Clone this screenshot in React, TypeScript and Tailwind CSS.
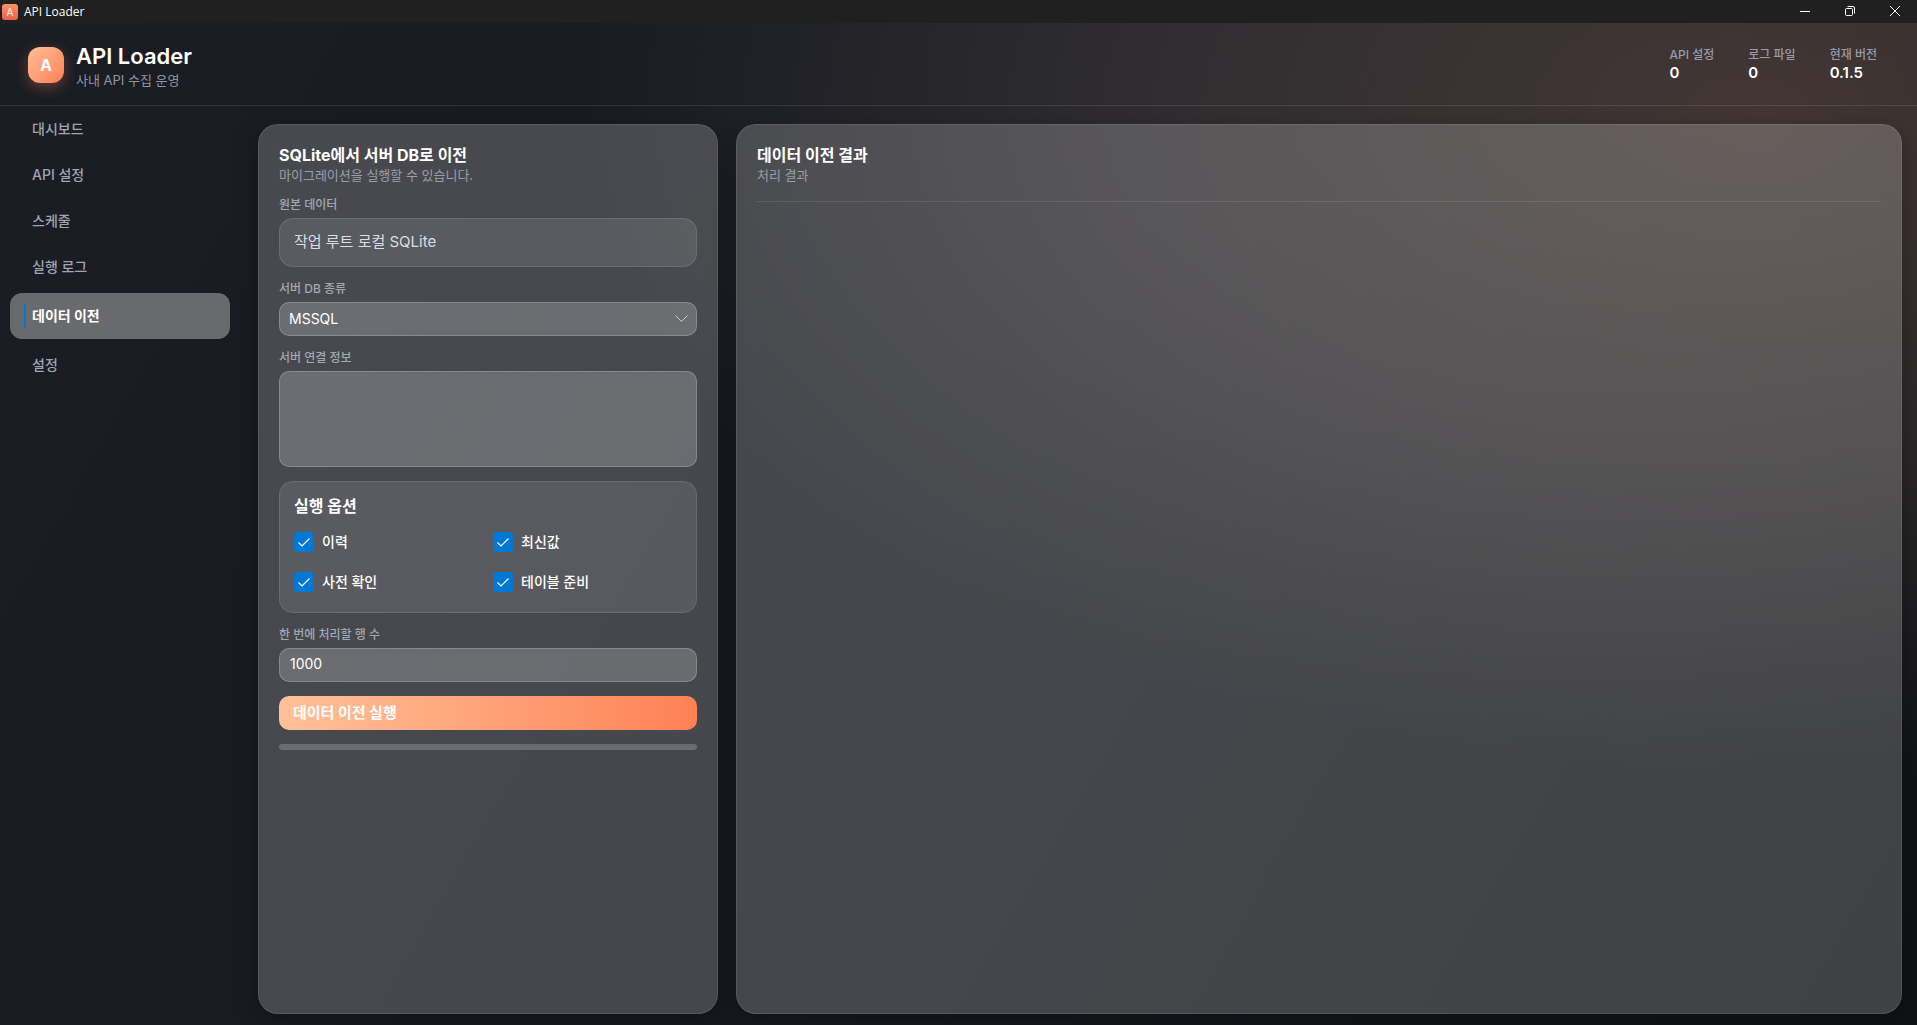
import React from 'react';

interface Stat {
  label: string;
  value: string;
}

interface MigrationOption {
  id: string;
  label: string;
}

const NAV_ITEMS = ['대시보드', 'API 설정', '스케줄', '실행 로그', '데이터 이전', '설정'];

const STATS: Stat[] = [
  { label: 'API 설정', value: '0' },
  { label: '로그 파일', value: '0' },
  { label: '현재 버전', value: '0.1.5' },
];

const OPTIONS: MigrationOption[] = [
  { id: 'history', label: '이력' },
  { id: 'latest', label: '최신값' },
  { id: 'precheck', label: '사전 확인' },
  { id: 'tables', label: '테이블 준비' },
];

const fieldClass =
  'block w-full rounded-[10px] border border-white/20 bg-white/20 text-sm text-white outline-none';

const TitleBar: React.FC = () => (
  <div className="flex h-[23px] items-center bg-[#202020] text-white">
    <div className="ml-0.5 flex size-4 items-center justify-center rounded-[3px] bg-linear-to-b from-[#ff9168] to-[#e8604c] text-[10px] leading-none text-white/90">
      A
    </div>
    <span className="ml-1.5 flex-1 font-['Open_Sans',sans-serif] text-xs leading-4">API Loader</span>
    <button type="button" aria-label="최소화" className="flex h-full w-[45px] items-center justify-center pb-0.5">
      <svg width="10" height="10" viewBox="0 0 10 10" fill="none" stroke="currentColor">
        <path d="M0 5.5h10" />
      </svg>
    </button>
    <button type="button" aria-label="이전 크기로" className="flex h-full w-[45px] items-center justify-center pb-0.5">
      <svg width="10" height="10" viewBox="0 0 10 10" fill="none" stroke="currentColor">
        <rect x="0.5" y="2.5" width="7" height="7" rx="1" />
        <path d="M2.5 0.5H8A1.5 1.5 0 0 1 9.5 2v5.5" />
      </svg>
    </button>
    <button type="button" aria-label="닫기" className="flex h-full w-[45px] items-center justify-center pb-0.5">
      <svg width="10" height="10" viewBox="0 0 10 10" fill="none" stroke="currentColor">
        <path d="M0 0l10 10M10 0L0 10" />
      </svg>
    </button>
  </div>
);

const Header: React.FC = () => (
  <header className="flex h-[83px] items-center justify-between border-b border-white/10 pt-0.5 pr-10 pl-7">
    <div className="flex items-center gap-3">
      <div className="flex size-9 items-center justify-center rounded-xl bg-linear-to-br from-[#ffbe98] to-[#ff8055] text-base font-bold text-white shadow-[0_4px_14px_rgba(255,127,80,0.35)]">
        A
      </div>
      <div className="pt-0.5">
        <h1 className="text-[22px] leading-7 font-semibold text-white">API Loader</h1>
        <p className="text-[13px] leading-5 text-[#9096a3]">사내 API 수집 운영</p>
      </div>
    </div>
    <dl className="flex gap-[34px]">
      {STATS.map(stat => (
        <div key={stat.label}>
          <dt className="text-xs leading-4 font-medium text-[#989ba8]">{stat.label}</dt>
          <dd className="text-[15px] leading-5 font-semibold text-white">{stat.value}</dd>
        </div>
      ))}
    </dl>
  </header>
);

interface SidebarProps {
  active: string;
  onSelect: (item: string) => void;
}

const Sidebar: React.FC<SidebarProps> = ({ active, onSelect }) => (
  <nav className="w-[240px] shrink-0 px-2.5">
    {NAV_ITEMS.map(item => (
      <button
        type="button"
        key={item}
        onClick={() => onSelect(item)}
        className={`flex h-[46px] w-full items-center rounded-xl pl-3.5 text-left text-sm
          ${item === active ? 'my-[3px] bg-[#696a6e] font-bold text-white' : 'font-medium text-[#a0a4b0]'}
        `}
      >
        <span className={`mr-1.5 h-6 w-0.5 ${item === active ? 'bg-[#0078d4]' : ''}`}></span>
        {item}
      </button>
    ))}
  </nav>
);

interface CardProps {
  title: string;
  description: string;
  className: string;
  children: React.ReactNode;
}

const Card: React.FC<CardProps> = ({ title, description, className, children }) => (
  <section
    className={`rounded-[20px] border border-white/10 bg-white/20 px-5 pt-5 pb-5 shadow-[0_6px_24px_rgba(0,0,0,0.3)] ${className}`}
  >
    <h2 className="text-base leading-5 font-bold text-white">{title}</h2>
    <p className="text-[13px] leading-5 text-[#9a9ea9]">{description}</p>
    {children}
  </section>
);

const labelClass = 'block text-xs leading-4 font-medium text-[#a3a7b2]';

const MigrationForm: React.FC = () => {
  const [checked, setChecked] = React.useState<Record<string, boolean>>({
    history: true,
    latest: true,
    precheck: true,
    tables: true,
  });
  const [rows, setRows] = React.useState('1000');

  return (
    <form onSubmit={e => e.preventDefault()} className="mt-3 flex flex-col gap-3.5">
      <div className="flex flex-col gap-[5px]">
        <label htmlFor="source" className={labelClass}>원본 데이터</label>
        <output
          id="source"
          className="flex h-[49px] items-center rounded-[14px] border border-white/10 bg-white/10 px-3.5 text-[15px] text-[#dcdde2]"
        >
          작업 루트 로컬 SQLite
        </output>
      </div>

      <div className="flex flex-col gap-[5px]">
        <label htmlFor="db-kind" className={labelClass}>서버 DB 종류</label>
        <div className="grid">
          <select id="db-kind" className={`col-start-1 row-start-1 h-[34px] appearance-none px-[9px] ${fieldClass}`}>
            <option>MSSQL</option>
          </select>
          <svg
            className="pointer-events-none col-start-1 row-start-1 mr-[9px] self-center justify-self-end text-[#c9cacd]"
            width="13"
            height="8"
            viewBox="0 0 13 8"
            fill="none"
            stroke="currentColor"
          >
            <path d="M0.5 0.5l6 6 6-6" />
          </svg>
        </div>
      </div>

      <div className="flex flex-col gap-[5px]">
        <label htmlFor="connection" className={labelClass}>서버 연결 정보</label>
        <textarea id="connection" className={`h-24 resize-none p-2.5 ${fieldClass}`} />
      </div>

      <fieldset className="h-[132px] rounded-[14px] border border-white/10 bg-white/10 px-3.5 pt-3.5">
        <legend className="float-left w-full text-base leading-5 font-bold text-white">실행 옵션</legend>
        <div className="grid w-full grid-cols-2 gap-x-2.5 gap-y-5 pt-4">
          {OPTIONS.map(option => (
            <label key={option.id} className="flex h-5 items-center gap-2 text-sm font-medium text-white">
              <span className="grid">
                <input
                  type="checkbox"
                  checked={checked[option.id]}
                  onChange={e => setChecked({ ...checked, [option.id]: e.target.checked })}
                  className="peer col-start-1 row-start-1 size-5 appearance-none rounded-[3px] border border-white/60 checked:border-[#0078d4] checked:bg-[#0078d4]"
                />
                <svg
                  className="pointer-events-none invisible col-start-1 row-start-1 size-5 text-white peer-checked:visible"
                  viewBox="0 0 20 20"
                  fill="none"
                  stroke="currentColor"
                  strokeWidth="1.2"
                >
                  <path d="M4.5 10.5l3.5 3.5 7.5-7.5" />
                </svg>
              </span>
              {option.label}
            </label>
          ))}
        </div>
      </fieldset>

      <div className="flex flex-col gap-[5px]">
        <label htmlFor="rows" className={labelClass}>한 번에 처리할 행 수</label>
        <input
          id="rows"
          type="text"
          value={rows}
          onChange={e => setRows(e.target.value)}
          className={`h-[34px] px-2.5 pb-1 ${fieldClass}`}
        />
      </div>

      <button
        type="submit"
        className="h-[34px] rounded-[10px] bg-linear-to-r from-[#ffc199] to-[#ff8055] px-3.5 text-left text-[15px] font-bold text-white"
      >
        데이터 이전 실행
      </button>
      <div role="progressbar" aria-label="진행률" aria-valuenow={0} className="h-1.5 rounded-full bg-white/20"></div>
    </form>
  );
};

const App: React.FC = () => {
  const [active, setActive] = React.useState('데이터 이전');

  return (
    <div className="flex min-h-screen flex-col bg-[#14161b] font-['Inter','Noto_Sans_CJK_KR',sans-serif]">
      <TitleBar />
      <div className="flex flex-1 flex-col bg-[radial-gradient(ellipse_62%_66%_at_92%_9%,rgba(255,185,155,0.2),rgba(255,205,185,0.11)_50%,transparent),linear-gradient(120deg,#1a1d24,#171a20_50%,#101215)]">
        <Header />
        <main className="flex flex-1">
          <Sidebar active={active} onSelect={setActive} />
          <div className="flex flex-1 gap-[18px] pt-[18px] pr-[15px] pb-[11px] pl-[18px]">
            <Card title="SQLite에서 서버 DB로 이전" description="마이그레이션을 실행할 수 있습니다." className="w-[460px] shrink-0">
              <MigrationForm />
            </Card>
            <Card title="데이터 이전 결과" description="처리 결과" className="flex-1">
              <hr className="mt-4 border-white/10" />
            </Card>
          </div>
        </main>
      </div>
    </div>
  );
};

export default App;
